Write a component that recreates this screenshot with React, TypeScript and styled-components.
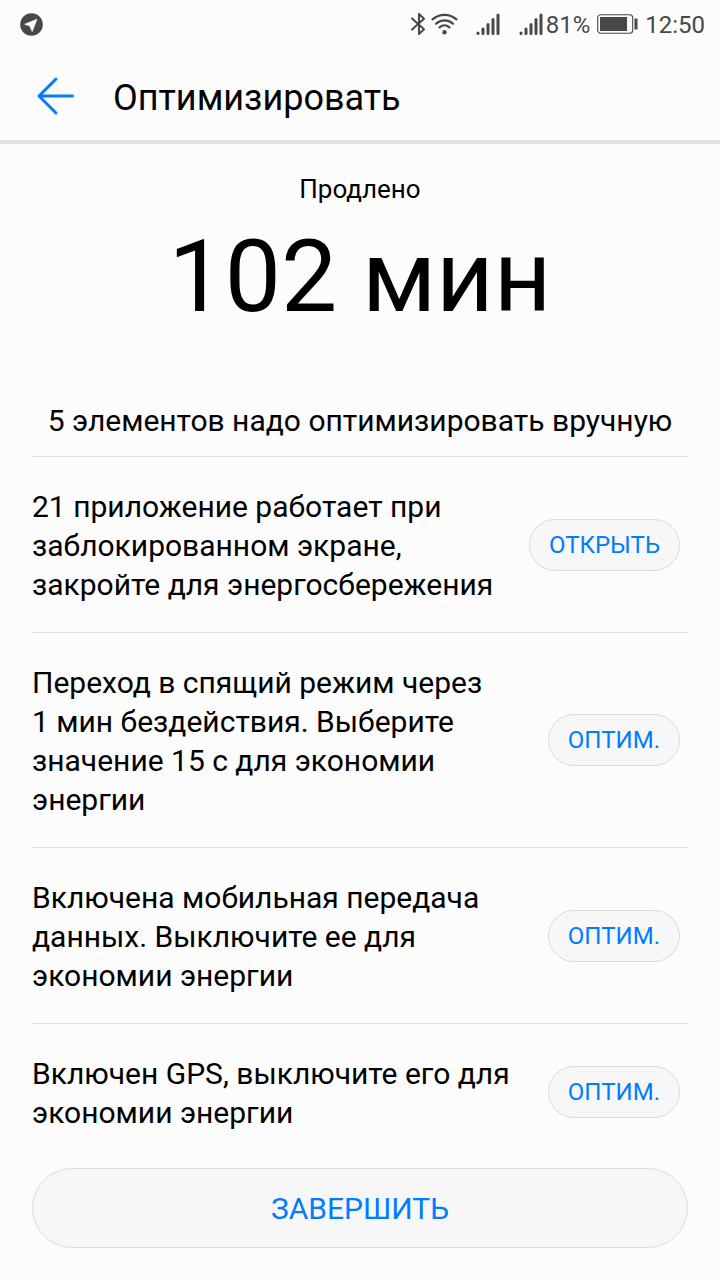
import React from "react";
import styled, { createGlobalStyle } from "styled-components";

const GlobalStyle = createGlobalStyle`
  * { box-sizing: border-box; }
  body {
    margin: 0;
    background: #fcfcfc;
    color: #000;
    font-family: Roboto, "Liberation Sans", sans-serif;
  }
`;

const Screen = styled.div`
  display: flex;
  flex-direction: column;
  min-height: 100vh;
`;

const StatusBar = styled.div`
  display: flex;
  align-items: center;
  height: 48px;
  padding: 0 15px 0 20px;
  color: #484848;
  font-size: 24px;
  line-height: 28px;
`;

const StatusIcons = styled.div`
  display: flex;
  align-items: center;
  margin-left: auto;
`;

const Icon = styled.svg<{ $gap?: number }>`
  display: block;
  flex: none;
  margin-right: ${(p) => p.$gap ?? 0}px;
`;

const StatusText = styled.span<{ $gap?: number }>`
  padding-top: 2px;
  margin-right: ${(p) => p.$gap ?? 0}px;
`;

const Header = styled.header`
  display: flex;
  align-items: center;
  gap: 37px;
  height: 96px;
  padding: 4px 36px 0;
  border-bottom: 4px solid #e1e1e1;
`;

const BackButton = styled.button`
  display: flex;
  padding: 0;
  border: 0;
  background: none;
  color: #007dff;
  cursor: pointer;
`;

const Title = styled.h1`
  margin: 0;
  padding-top: 4px;
  font-size: 36px;
  font-weight: 400;
  line-height: 44px;
`;

const Main = styled.main`
  flex: 1;
  padding: 0 32px;
`;

const Summary = styled.section`
  padding-top: 29px;
  text-align: center;
`;

const SummaryLabel = styled.p`
  margin: 0;
  font-size: 26px;
  line-height: 32px;
`;

const SummaryValue = styled.p`
  margin: 0;
  font-size: 100px;
  line-height: 144px;
`;

const ListTitle = styled.h2`
  margin: 0;
  padding: 52px 0 15px;
  border-bottom: 1px solid #e1e1e1;
  font-size: 30px;
  font-weight: 400;
  line-height: 40px;
  text-align: center;
`;

const List = styled.ul`
  margin: 0;
  padding: 0;
  list-style: none;
`;

const Row = styled.li`
  display: flex;
  align-items: center;
  justify-content: space-between;
  gap: 32px;
  padding: 28px 8px 28px 0;
  border-bottom: 1px solid #e1e1e1;

  &:last-child { border-bottom: 0; }
`;

const RowText = styled.p`
  flex: 1;
  margin: 0;
  padding-top: 2px;
  font-size: 30px;
  line-height: 39px;
`;

const PillButton = styled.button<{ $large?: boolean }>`
  flex: none;
  width: ${(p) => (p.$large ? "100%" : "auto")};
  height: ${(p) => (p.$large ? 80 : 52)}px;
  padding: 0 19px;
  border: 1px solid #dcdcdc;
  border-radius: 40px;
  background: #f7f7f7;
  color: #007dff;
  font-family: inherit;
  font-size: ${(p) => (p.$large ? 30 : 24)}px;
  cursor: pointer;
`;

const Footer = styled.footer`
  padding: 8px 32px 32px;
`;

const items = [
  { text: "21 приложение работает при заблокированном экране, закройте для энергосбережения", action: "ОТКРЫТЬ" },
  { text: "Переход в спящий режим через 1\u00a0мин бездействия. Выберите значение 15\u00a0с для экономии энергии", action: "ОПТИМ." },
  { text: "Включена мобильная передача данных. Выключите ее для экономии энергии", action: "ОПТИМ." },
  { text: "Включен GPS, выключите его для экономии энергии", action: "ОПТИМ." },
];

const Signal = ({ gap }: { gap: number }) => (
  <Icon $gap={gap} width="24" height="24" viewBox="0 0 24 24" stroke="currentColor" strokeWidth="3" strokeLinecap="round" aria-hidden="true">
    <path d="M2 21.500V21M7 21.500V17M12 21.500V12.500M17 21.500V7.500M22 21.500V3" />
  </Icon>
);

export default function App() {
  return (
    <>
      <GlobalStyle />
      <Screen>
        <StatusBar>
          <Icon width="23" height="23" viewBox="0 0 23 23" aria-hidden="true">
            <circle cx="11.5" cy="11.5" r="11.3" fill="#484848" />
            <path d="M17 6.2 4.6 11.2 9.7 13 12.2 18.6Z" fill="#fcfcfc" stroke="#fcfcfc" strokeWidth="0.6" strokeLinejoin="round" />
          </Icon>
          <StatusIcons>
            <Icon $gap={5} width="16" height="24" viewBox="0 0 16 24" fill="none" stroke="currentColor" strokeWidth="2" strokeLinejoin="round" strokeLinecap="round" aria-hidden="true">
              <path d="M2 6.500 14 17.300 9 22V2L14 6.700 2 17.500" />
            </Icon>
            <Icon $gap={18} width="27" height="24" viewBox="0 0 27 24" fill="none" stroke="currentColor" strokeWidth="2.2" strokeLinecap="round" aria-hidden="true">
              <path d="M1.500 7.400C8.500 1.300 18.500 1.300 25.500 7.400M5 11.700C10 7.200 17 7.200 22 11.700M8.600 15.400C11.500 12.700 15.500 12.700 18.400 15.400" />
              <circle cx="13.500" cy="20.300" r="2.200" fill="currentColor" stroke="none" />
            </Icon>
            <Signal gap={19} />
            <Signal gap={3} />
            <StatusText $gap={7}>81%</StatusText>
            <Icon $gap={7} width="41" height="20" viewBox="0 0 41 20" fill="none" stroke="currentColor" aria-hidden="true">
              <rect x="0.700" y="0.700" width="35" height="18.600" rx="3" strokeWidth="1.100" />
              <rect x="3" y="3" width="27" height="14" fill="currentColor" stroke="none" />
              <path d="M39 4.500V15.500" strokeWidth="3" />
            </Icon>
            <StatusText>12:50</StatusText>
          </StatusIcons>
        </StatusBar>
        <Header>
          <BackButton aria-label="Назад">
            <Icon width="40" height="40" viewBox="0 0 40 40" fill="none" stroke="currentColor" strokeWidth="3" strokeLinecap="round" strokeLinejoin="round" aria-hidden="true">
              <path d="M36.500 20H3M20 3 3 20 20 37" />
            </Icon>
          </BackButton>
          <Title>Оптимизировать</Title>
        </Header>
        <Main>
          <Summary>
            <SummaryLabel>Продлено</SummaryLabel>
            <SummaryValue>102 мин</SummaryValue>
          </Summary>
          <ListTitle>5 элементов надо оптимизировать вручную</ListTitle>
          <List>
            {items.map((item) => (
              <Row key={item.text}>
                <RowText>{item.text}</RowText>
                <PillButton>{item.action}</PillButton>
              </Row>
            ))}
          </List>
        </Main>
        <Footer>
          <PillButton $large>ЗАВЕРШИТЬ</PillButton>
        </Footer>
      </Screen>
    </>
  );
}
